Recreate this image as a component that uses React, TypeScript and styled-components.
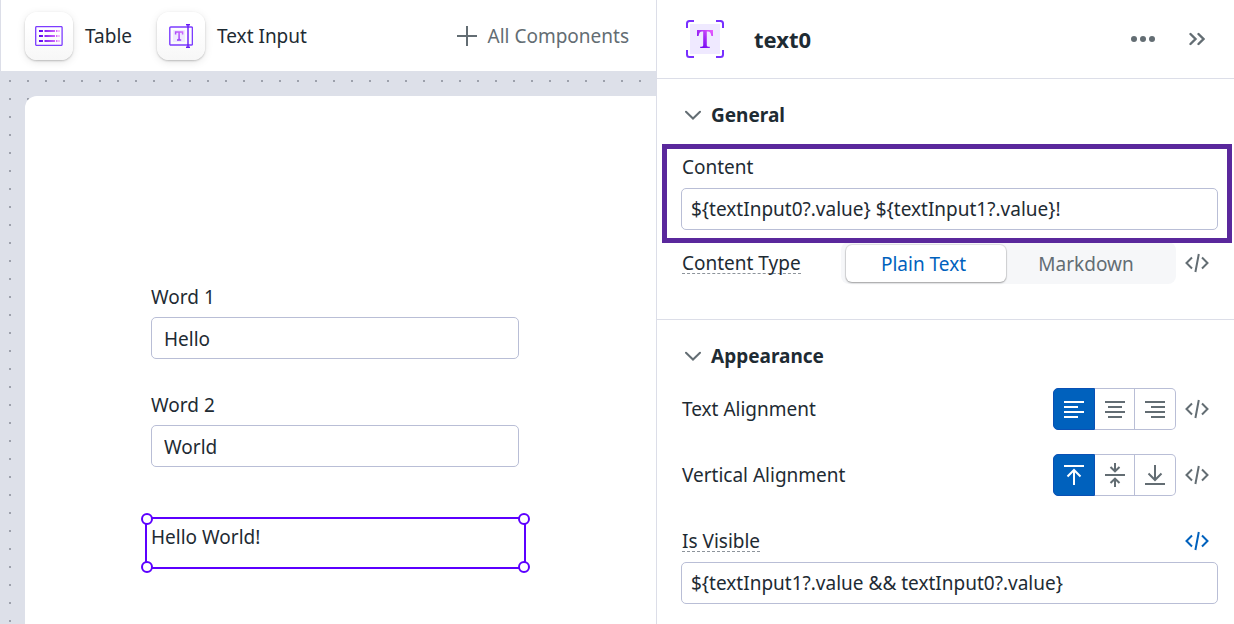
import React from "react";
import styled, { createGlobalStyle } from "styled-components";

const ink = "#1e2b33";
const muted = "#636d73";
const line = "#dcdee8";
const fieldLine = "#b9bed6";
const blue = "#0061bd";
const violet = "#5c00ff";

const GlobalStyle = createGlobalStyle`
  *, *::before, *::after { box-sizing: border-box; }
  body { margin: 0; background: #fff; }
  body, button, input {
    font-family: "Noto Sans", sans-serif;
    font-size: 19px;
    line-height: 28px;
    color: ${ink};
  }
  button { border: 0; padding: 0; background: none; cursor: pointer; }
  svg { display: block; flex: none; }
`;

const Shell = styled.div`
  display: grid;
  grid-template-columns: minmax(0, 1fr) 578px;
  min-height: 100vh;
`;

const Workspace = styled.main`
  display: flex;
  flex-direction: column;
`;

const Toolbar = styled.div`
  display: flex;
  align-items: center;
  height: 71px;
  padding: 0 27px 0 24px;
  border-left: 1px solid ${line};
  background: #fff;
`;

const ToolButton = styled.button`
  display: flex;
  align-items: center;
  gap: 12px;
  margin-right: 25px;
`;

const Tile = styled.span`
  display: grid;
  place-items: center;
  width: 48px;
  height: 48px;
  border-radius: 12px;
  background: linear-gradient(#fff 30%, #f7f7f7);
  box-shadow: 0 1px 2px rgba(0, 0, 0, 0.22), 0 2px 8px rgba(0, 0, 0, 0.1);
`;

const AllButton = styled.button`
  display: flex;
  align-items: center;
  gap: 11px;
  margin-left: auto;
  padding-top: 1px;
  color: ${muted};
`;

const Canvas = styled.div`
  flex: 1;
  display: flex;
  padding: 25px 0 0 25px;
  background-color: #dde0e9;
  background-image: conic-gradient(from 90deg at 16px 16px, #9da1ac 90deg, transparent 0);
  background-size: 18px 18px;
  background-position: -7px -7px;
`;

const Artboard = styled.form`
  flex: 1;
  padding: 187px 137px 0 126px;
  border-top-left-radius: 12px;
  background: #fff;
`;

const Field = styled.div`
  display: flex;
  flex-direction: column;
  gap: 6px;
  margin-bottom: 32px;
`;

const TextBox = styled.input<{ $canvas?: boolean }>`
  width: 100%;
  height: 42px;
  padding: ${(p) => (p.$canvas ? "2px 12px 0" : "0 9px")};
  border: 1px solid ${fieldLine};
  border-radius: 5px;
  background: #fff;
  outline: none;
`;

const Selection = styled.div`
  position: relative;
  height: 52px;
  margin: 50px -7px 0 -6px;
  padding: 4px;
  border: 2px solid ${violet};
`;

const Handle = styled.span<{ $v: "top" | "bottom"; $h: "left" | "right" }>`
  position: absolute;
  ${(p) => p.$v}: -6px;
  ${(p) => p.$h}: -6px;
  width: 12px;
  height: 12px;
  border: 2px solid ${violet};
  border-radius: 50%;
  background: #fff;
`;

const Output = styled.p`
  margin: 0;
`;

const Inspector = styled.aside`
  border-left: 1px solid ${line};
  background: #fff;
`;

const InspectorHead = styled.header`
  display: flex;
  align-items: center;
  height: 79px;
  padding: 0 29px;
  border-bottom: 1px solid ${line};
`;

const Title = styled.h1`
  flex: 1;
  margin: 0 0 0 30px;
  font-size: 22px;
  line-height: 28px;
`;

const HeadButton = styled.button`
  margin-left: 34px;
  color: ${muted};
`;

const Section = styled.section<{ $divided?: boolean }>`
  padding: 22px 16px ${(p) => (p.$divided ? 35 : 20)}px 24px;
  border-bottom: ${(p) => (p.$divided ? `1px solid ${line}` : "0")};
`;

const SectionTitle = styled.h2`
  margin: 0;
  font-size: 19px;
  line-height: 28px;
`;

const Disclosure = styled.button`
  display: flex;
  align-items: center;
  gap: 10px;
  padding-left: 4px;
  font-weight: 700;
`;

const Highlight = styled.div`
  position: relative;
  z-index: 1;
  display: flex;
  flex-direction: column;
  gap: 7px;
  margin: 15px -14px 0 -19px;
  padding: 4px 9px 8px 14px;
  border: 5px solid #5a289c;
`;

const Row = styled.div<{ $gap?: number }>`
  display: flex;
  align-items: center;
  margin-top: ${(p) => p.$gap ?? 0}px;
`;

const Name = styled.label`
  flex: 1;
  padding-left: 1px;
`;

const Hint = styled.span`
  display: inline-block;
  height: 25px;
  border-bottom: 1px dashed #8d949b;
`;

const Tabs = styled.div`
  display: flex;
  width: 335px;
  height: 42px;
  padding: 3px 5px 2px;
  border-radius: 8px;
  background: #f6f7f9;
`;

const Tab = styled.button<{ $on?: boolean }>`
  flex: 1;
  padding-right: 5px;
  border-radius: 6px;
  color: ${(p) => (p.$on ? blue : muted)};
  background: ${(p) => (p.$on ? "#fff" : "transparent")};
  background-clip: padding-box;
  box-shadow: ${(p) => (p.$on ? "0 0 0 1px rgba(0,0,0,.08), 0 1px 2px rgba(0,0,0,.3)" : "none")};
  &:first-child { flex: 0 0 160px; }
`;

const CodeButton = styled.button<{ $on?: boolean }>`
  display: grid;
  place-items: center;
  width: 42px;
  height: 28px;
  color: ${(p) => (p.$on ? blue : muted)};
`;

const Choices = styled.div`
  display: flex;
  width: 123px;
  height: 42px;
`;

const Choice = styled.button<{ $on?: boolean }>`
  display: grid;
  place-items: center;
  flex: 1;
  border: 1px solid ${(p) => (p.$on ? "#0a50b4" : fieldLine)};
  color: ${(p) => (p.$on ? "#fff" : muted)};
  background: ${(p) => (p.$on ? blue : "#fff")};
  &:first-child { border-radius: 5px 0 0 5px; }
  &:last-child { border-radius: 0 5px 5px 0; }
  & + & { border-left-width: 0; }
`;

const Chevron = () => (
  <svg width="16" height="10" viewBox="0 0 16 10" fill="none" stroke={muted} strokeWidth="2">
    <path d="M1 1.700l7 6.800 7-6.800" strokeLinecap="round" />
  </svg>
);

const CodeIcon = () => (
  <svg width="24" height="20" viewBox="0 0 24 20" fill="none" stroke="currentColor" strokeWidth="2">
    <path d="M7 4.500L1.500 10 7 15.500M17 4.500l5.500 5.500-5.500 5.500M13.800 1l-3.400 18" />
  </svg>
);

const TableIcon = () => (
  <svg width="28" height="20" viewBox="0 0 28 20" fill="none">
    <defs>
      <linearGradient id="rows" gradientUnits="userSpaceOnUse" x1="4" y1="0" x2="25" y2="0">
        <stop offset="0" stopColor="#5a00f0" />
        <stop offset="1" stopColor="#f080ff" />
      </linearGradient>
    </defs>
    <rect x=".7" y=".6" width="26.4" height="18.8" rx="1" stroke="#7c3cff" strokeWidth="1.3" />
    <path
      d="M4 5h4M9.500 5h10.500M21 5h1.500M23.500 5h1M4 10h4M9.500 10h10.500M21 10h1.500M23.500 10h1M4 15h4M9.500 15h10.500M21 15h1.500M23.500 15h1"
      stroke="url(#rows)"
      strokeWidth="1.8"
    />
  </svg>
);

const InputIcon = () => (
  <svg width="24" height="24" viewBox="0 0 24 24" fill="none">
    <defs>
      <linearGradient id="serif" gradientUnits="userSpaceOnUse" x1="6" y1="16" x2="14" y2="7">
        <stop offset="0" stopColor="#8a30f5" />
        <stop offset="1" stopColor="#d870ff" />
      </linearGradient>
    </defs>
    <rect x="4" y="6" width="12" height="12" fill="#efeaff" />
    <rect x=".8" y="3" width="22.6" height="18" rx="1" stroke="#7c3cff" strokeWidth="1.4" />
    <path d="M6.600 10.400V8h7v2.400M10.100 8v8M8 16h4.200" stroke="url(#serif)" strokeWidth="1.500" />
    <path d="M17 .8h4M17 23.200h4M19 .8v22.400" stroke="#6a1cf5" strokeWidth="1.400" />
  </svg>
);

const TextIcon = () => (
  <svg width="38" height="38" viewBox="0 0 38 38" fill="none">
    <defs>
      <linearGradient id="glyph" gradientUnits="userSpaceOnUse" x1="12" y1="26" x2="27" y2="10">
        <stop offset="0" stopColor="#6a00f5" />
        <stop offset=".5" stopColor="#a52cf5" />
        <stop offset="1" stopColor="#f060ff" />
      </linearGradient>
    </defs>
    <rect x="4" y="4" width="30" height="30" fill="#efe9ff" />
    <path
      d="M1 8V3.500Q1 1 3.500 1H8M30 1h4.500Q37 1 37 3.500V8M37 30v4.500Q37 37 34.500 37H30M8 37H3.500Q1 37 1 34.500V30"
      stroke="#7830ff"
      strokeWidth="2"
    />
    <path
      d="M11 10h16v6h-1.600c-.5-3.300-1.400-4.500-3.500-4.500H20.800V25.300c0 1.100.8 1.400 3 1.500V28h-9.600v-1.200c2.200-.1 3-.4 3-1.500V11.500H16.100c-2.100 0-3 1.200-3.500 4.500H11z"
      fill="url(#glyph)"
    />
  </svg>
);

const Bars = ({ d }: { d: string }) => (
  <svg width="20" height="20" viewBox="0 0 20 20" fill="none" stroke="currentColor" strokeWidth="2">
    <path d={d} />
  </svg>
);

const VerticalMiddle = () => (
  <svg width="20" height="24" viewBox="0 0 20 24" fill="none" stroke="currentColor" strokeWidth="2">
    <path d="M0 12h20M10 0v8M5.500 4L10 8.300 14.500 4M10 24v-8M5.500 20l4.500-4.300 4.500 4.300" />
  </svg>
);

export default function App() {
  return (
    <>
      <GlobalStyle />
      <Shell>
        <Workspace>
          <Toolbar>
            <ToolButton>
              <Tile><TableIcon /></Tile>
              Table
            </ToolButton>
            <ToolButton>
              <Tile><InputIcon /></Tile>
              Text Input
            </ToolButton>
            <AllButton>
              <svg width="20" height="20" viewBox="0 0 20 20" fill="none" stroke="currentColor" strokeWidth="2">
                <path d="M10 0v20M0 10h20" />
              </svg>
              All Components
            </AllButton>
          </Toolbar>
          <Canvas>
            <Artboard>
              <Field>
                <label htmlFor="word1">Word 1</label>
                <TextBox id="word1" $canvas defaultValue="Hello" />
              </Field>
              <Field>
                <label htmlFor="word2">Word 2</label>
                <TextBox id="word2" $canvas defaultValue="World" />
              </Field>
              <Selection>
                <Output>Hello World!</Output>
                <Handle $v="top" $h="left" />
                <Handle $v="top" $h="right" />
                <Handle $v="bottom" $h="left" />
                <Handle $v="bottom" $h="right" />
              </Selection>
            </Artboard>
          </Canvas>
        </Workspace>

        <Inspector>
          <InspectorHead>
            <TextIcon />
            <Title>text0</Title>
            <HeadButton aria-label="More actions">
              <svg width="24" height="6" viewBox="0 0 24 6" fill="currentColor">
                <circle cx="3" cy="3" r="3" />
                <circle cx="12" cy="3" r="3" />
                <circle cx="21" cy="3" r="3" />
              </svg>
            </HeadButton>
            <HeadButton aria-label="Collapse panel">
              <svg width="16" height="14" viewBox="0 0 16 14" fill="none" stroke="currentColor" strokeWidth="2.400" strokeLinecap="round">
                <path d="M1.500 2L6.500 7l-5 5M9.500 2l5 5-5 5" />
              </svg>
            </HeadButton>
          </InspectorHead>

          <Section $divided>
            <SectionTitle>
              <Disclosure aria-expanded="true"><Chevron />General</Disclosure>
            </SectionTitle>
            <Highlight>
              <Name htmlFor="content">Content</Name>
              <TextBox id="content" defaultValue="${textInput0?.value} ${textInput1?.value}!" />
            </Highlight>
            <Row $gap={-1}>
              <Name as="span"><Hint>Content Type</Hint></Name>
              <Tabs role="group" aria-label="Content Type">
                <Tab $on aria-pressed="true">Plain Text</Tab>
                <Tab aria-pressed="false">Markdown</Tab>
              </Tabs>
              <CodeButton aria-label="Edit content type as code"><CodeIcon /></CodeButton>
            </Row>
          </Section>

          <Section>
            <SectionTitle>
              <Disclosure aria-expanded="true"><Chevron />Appearance</Disclosure>
            </SectionTitle>
            <Row $gap={18}>
              <Name as="span">Text Alignment</Name>
              <Choices role="group" aria-label="Text Alignment">
                <Choice $on aria-pressed="true" aria-label="Left"><Bars d="M0 3h20M0 8h14M0 13h20M0 18h14" /></Choice>
                <Choice aria-pressed="false" aria-label="Center"><Bars d="M0 3h20M3 8h14M0 13h20M3 18h14" /></Choice>
                <Choice aria-pressed="false" aria-label="Right"><Bars d="M0 3h20M6 8h14M0 13h20M6 18h14" /></Choice>
              </Choices>
              <CodeButton aria-label="Edit text alignment as code"><CodeIcon /></CodeButton>
            </Row>
            <Row $gap={24}>
              <Name as="span">Vertical Alignment</Name>
              <Choices role="group" aria-label="Vertical Alignment">
                <Choice $on aria-pressed="true" aria-label="Top"><Bars d="M0 1h20M10 20V5M3.500 11.500L10 5l6.500 6.500" /></Choice>
                <Choice aria-pressed="false" aria-label="Middle"><VerticalMiddle /></Choice>
                <Choice aria-pressed="false" aria-label="Bottom"><Bars d="M0 19h20M10 0v15M3.500 8.500L10 15l6.500-6.500" /></Choice>
              </Choices>
              <CodeButton aria-label="Edit vertical alignment as code"><CodeIcon /></CodeButton>
            </Row>
            <Row $gap={31}>
              <Name htmlFor="visible"><Hint>Is Visible</Hint></Name>
              <CodeButton $on aria-label="Edit visibility as code"><CodeIcon /></CodeButton>
            </Row>
            <Row $gap={7}>
              <TextBox id="visible" defaultValue="${textInput1?.value && textInput0?.value}" />
            </Row>
          </Section>
        </Inspector>
      </Shell>
    </>
  );
}
